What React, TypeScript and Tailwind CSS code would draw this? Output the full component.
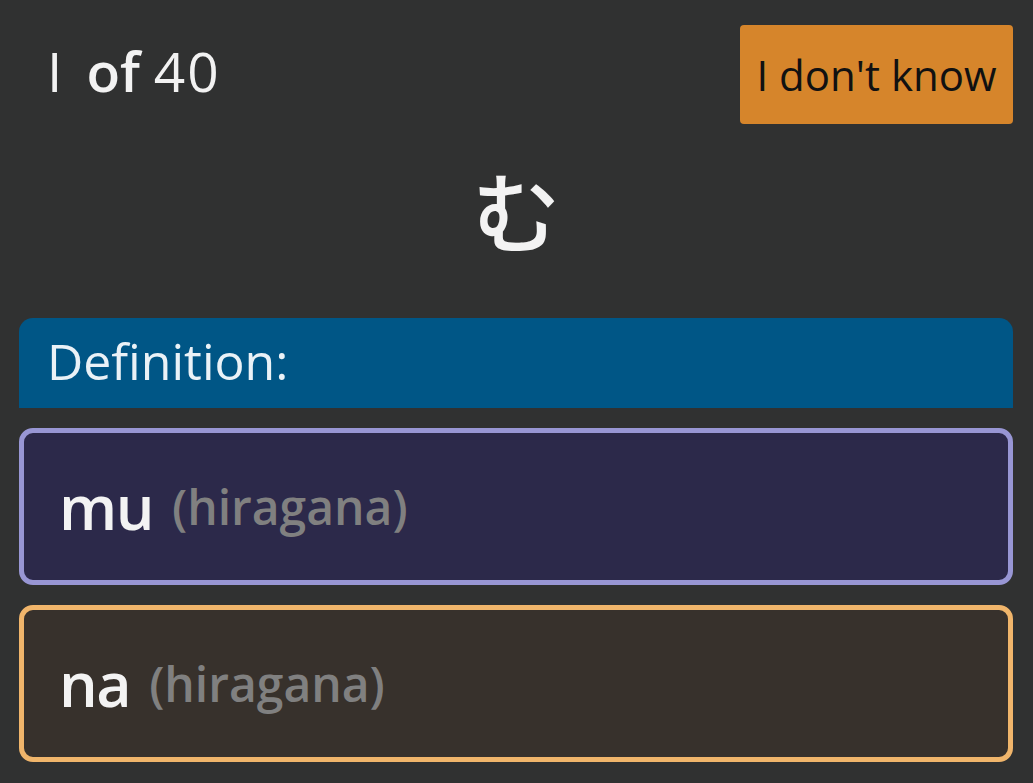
import React from 'react';

const Option = ({ label, border, bg }: { label: string; border: string; bg: string }) => (
  <div className={`h-[157px] rounded-[14px] border-[5px] ${border} ${bg} flex items-center pl-[35px]`}>
    <span className="text-[61px] font-semibold text-[#f3f3f3] tracking-[-1.5px]">{label}</span>
    <span className="ml-[19px] text-[48px] font-semibold text-[#808080]">(hiragana)</span>
  </div>
);

export default function App() {
  return (
    <div className="min-h-screen w-full bg-[#303131] px-[19px] pr-[20px] font-['Open_Sans',sans-serif] leading-none">
      <div className="flex items-center justify-between pt-[25px]">
        <div className="pl-[28px] pb-[8px] text-[55px] text-[#f2f2f2]">
          <span>I</span>
          <span className="ml-[24px] font-semibold">of</span>
          <span className="ml-[14px] tracking-[2px]">40</span>
        </div>
        <button className="h-[99px] w-[273px] rounded-[4px] bg-[#d6852b] text-[42px] text-[#111]">
          I don't know
        </button>
      </div>
      <div className="flex h-[194px] items-center justify-center pb-[26px] font-['Noto_Sans_CJK_JP',sans-serif] text-[88px] font-medium text-[#f3f3f3]">
        む
      </div>
      <div className="flex h-[90px] items-center rounded-t-[14px] bg-[#005686] pl-[28px] pb-[4px] text-[50px] text-[#eaf2f7]">
        Definition:
      </div>
      <div className="mt-[20px] flex flex-col gap-[20px]">
        <Option label="mu" border="border-[#9896d4]" bg="bg-[#2c294a]" />
        <Option label="na" border="border-[#f0b56b]" bg="bg-[#37312c]" />
      </div>
    </div>
  );
}
